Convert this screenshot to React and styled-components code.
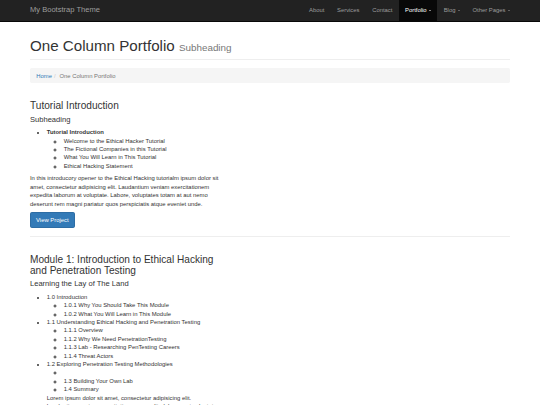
import React from 'react'
import styled, { createGlobalStyle } from 'styled-components'

// the page is drawn at Bootstrap 3 sizes and scaled to the 540px window
const Global = createGlobalStyle`
  html, body {
    margin: 0;
    padding: 0;
    background: #fff;
  }
  body {
    font-family: "Liberation Sans", Arial, Helvetica, sans-serif;
    font-size: 14px;
    line-height: 1.42857;
    color: #333;
    overflow: hidden;
  }
  * { box-sizing: border-box; }
`

const Page = styled.div`
  width: 1282.5px;
  height: 962px;
  overflow: hidden;
  zoom: 0.42105;
`

const Container = styled.div`
  width: 1170px;
  margin: 0 auto;
  padding: 0 15px;
`

const Navbar = styled.nav`
  background: #222;
  border-bottom: 1px solid #080808;
  min-height: 50px;
`

const NavInner = styled(Container)`
  display: flex;
  justify-content: space-between;
  align-items: stretch;
`

const Brand = styled.a`
  display: block;
  height: 50px;
  padding: 15px;
  margin-left: -15px;
  font-size: 18px;
  line-height: 20px;
  color: #9d9d9d;
  text-decoration: none;
`

const NavList = styled.ul`
  display: flex;
  list-style: none;
  margin: 0 -15px 0 0;
  padding: 0;
`

const NavLink = styled.a`
  display: block;
  padding: 15px;
  line-height: 20px;
  white-space: nowrap;
  color: ${p => (p.$active ? '#fff' : '#9d9d9d')};
  background: ${p => (p.$active ? '#080808' : 'transparent')};
  text-decoration: none;
`

const Caret = styled.span`
  display: inline-block;
  width: 0;
  height: 0;
  margin-left: 2px;
  vertical-align: middle;
  border-top: 4px dashed;
  border-right: 4px solid transparent;
  border-left: 4px solid transparent;
`

const PageHeader = styled.h1`
  margin: 39px 0 20px;
  padding-bottom: 9px;
  border-bottom: 1px solid #eee;
  font-size: 36px;
  font-weight: 500;
  line-height: 1.1;

  small {
    font-size: 65%;
    font-weight: normal;
    color: #777;
  }
`

const Breadcrumb = styled.ol`
  list-style: none;
  margin: 0 0 20px;
  padding: 8px 15px;
  background: #f5f5f5;
  border-radius: 4px;

  li { display: inline-block; }
  li + li:before {
    content: "/\\00a0";
    padding: 0 5px;
    color: #ccc;
  }
  a { color: #337ab7; text-decoration: none; }
  .active { color: #777; }
`

const Row = styled.div`
  display: flex;
  margin: 0 -15px;
`

const Col = styled.div`
  width: 41.66667%;
  padding: 0 15px;
`

const Title = styled.h3`
  margin: 20px 0 10px;
  font-size: 24px;
  font-weight: 500;
  line-height: 1.1;
`

const Subtitle = styled.h4`
  margin: 10px 0;
  font-size: 18px;
  font-weight: 500;
  line-height: 1.1;
`

const List = styled.ul`
  margin: 0 0 10px;
  padding-left: 40px;

  ul {
    margin: 0;
    padding-left: 40px;
    list-style: circle;
  }
`

const Text = styled.p`
  margin: 0 0 10px;
`

const Button = styled.a`
  display: inline-block;
  vertical-align: middle;
  padding: 6px 12px;
  font-size: 14px;
  line-height: 1.42857;
  color: #fff;
  background: #337ab7;
  border: 1px solid #2e6da4;
  border-radius: 4px;
  text-decoration: none;
`

const Rule = styled.hr`
  margin: 20px 0;
  border: 0;
  border-top: 1px solid #eee;
`

const lorem =
  'Lorem ipsum dolor sit amet, consectetur adipisicing elit. Laudantium veniam exercitationem expedita laborum at voluptate. Labore, voluptates totam at aut nemo deserunt rem magni pariatur quos perspiciatis atque eveniet unde.'

const navItems = [
  { label: 'About' },
  { label: 'Services' },
  { label: 'Contact' },
  { label: 'Portfolio', dropdown: true, active: true },
  { label: 'Blog', dropdown: true },
  { label: 'Other Pages', dropdown: true },
]

export default function App() {
  return (
    <Page>
      <Global />
      <Navbar>
        <NavInner>
          <Brand href="#">My Bootstrap Theme</Brand>
          <NavList>
            {navItems.map(item => (
              <li key={item.label}>
                <NavLink href="#" $active={item.active}>
                  {item.label}
                  {item.dropdown && <> <Caret /></>}
                </NavLink>
              </li>
            ))}
          </NavList>
        </NavInner>
      </Navbar>

      <Container>
        <PageHeader>
          One Column Portfolio <small>Subheading</small>
        </PageHeader>

        <Breadcrumb>
          <li><a href="#">Home</a></li>
          <li className="active">One Column Portfolio</li>
        </Breadcrumb>

        <Row>
          <Col>
            <Title>Tutorial Introduction</Title>
            <Subtitle>Subheading</Subtitle>
            <List>
              <li>
                <strong>Tutorial Introduction</strong>
                <ul>
                  <li>Welcome to the Ethical Hacker Tutorial</li>
                  <li>The Fictional Companies in this Tutorial</li>
                  <li>What You Will Learn in This Tutorial</li>
                  <li>Ethical Hacking Statement</li>
                </ul>
              </li>
            </List>
            <Text>
              In this introducory opener to the Ethical Hacking tutorialm ipsum dolor sit amet,
              consectetur adipisicing elit. Laudantium veniam exercitationem expedita laborum at
              voluptate. Labore, voluptates totam at aut nemo deserunt rem magni pariatur quos
              perspiciatis atque eveniet unde.
            </Text>
            <Button href="#">View Project</Button>
          </Col>
        </Row>

        <Rule />

        <Row>
          <Col>
            <Title>Module 1: Introduction to Ethical Hacking and Penetration Testing</Title>
            <Subtitle>Learning the Lay of The Land</Subtitle>
            <List>
              <li>
                1.0 Introduction
                <ul>
                  <li>1.0.1 Why You Should Take This Module</li>
                  <li>1.0.2 What You Will Learn in This Module</li>
                </ul>
              </li>
              <li>
                1.1 Understanding Ethical Hacking and Penetration Testing
                <ul>
                  <li>1.1.1 Overview</li>
                  <li>1.1.2 Why We Need PenetrationTesting</li>
                  <li>1.1.3 Lab - Researching PenTesting Careers</li>
                  <li>1.1.4 Threat Actors</li>
                </ul>
              </li>
              <li>
                1.2 Exploring Penetration Testing Methodologies
                <ul>
                  <li>{'\u00a0'}</li>
                  <li>1.3 Building Your Own Lab</li>
                  <li>1.4 Summary</li>
                </ul>
                {lorem}
              </li>
            </List>
          </Col>
        </Row>
      </Container>
    </Page>
  )
}
